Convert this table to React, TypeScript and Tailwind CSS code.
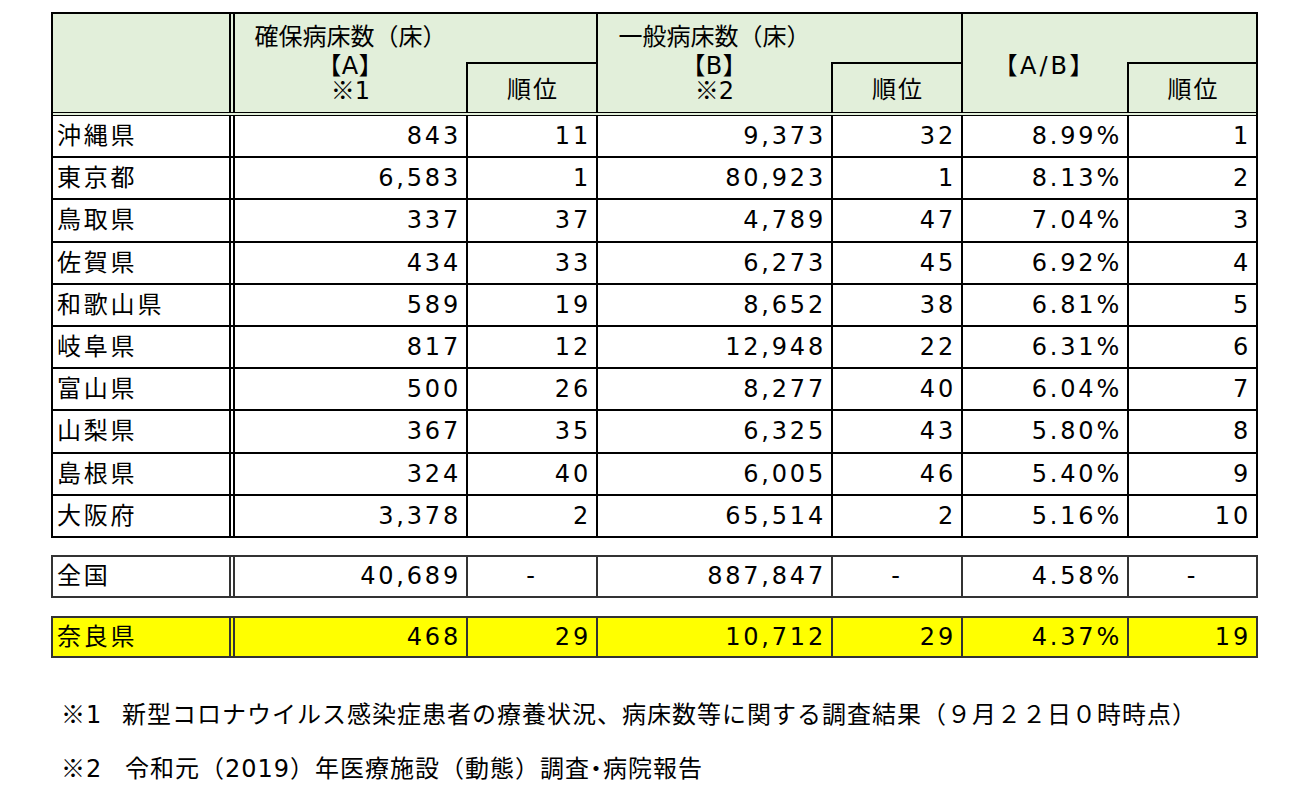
import React from "react"
import clsx from "clsx"

type Row = [string, string, string, string, string, string, string]

const ranking: Row[] = [
  ["沖縄県", "843", "11", "9,373", "32", "8.99%", "1"],
  ["東京都", "6,583", "1", "80,923", "1", "8.13%", "2"],
  ["鳥取県", "337", "37", "4,789", "47", "7.04%", "3"],
  ["佐賀県", "434", "33", "6,273", "45", "6.92%", "4"],
  ["和歌山県", "589", "19", "8,652", "38", "6.81%", "5"],
  ["岐阜県", "817", "12", "12,948", "22", "6.31%", "6"],
  ["富山県", "500", "26", "8,277", "40", "6.04%", "7"],
  ["山梨県", "367", "35", "6,325", "43", "5.80%", "8"],
  ["島根県", "324", "40", "6,005", "46", "5.40%", "9"],
  ["大阪府", "3,378", "2", "65,514", "2", "5.16%", "10"],
]

const national: Row = ["全国", "40,689", "-", "887,847", "-", "4.58%", "-"]
const nara: Row = ["奈良県", "468", "29", "10,712", "29", "4.37%", "19"]

const cjk = "font-['Noto_Sans_CJK_JP',sans-serif]"
const palt = "font-['Noto_Sans_CJK_JP',sans-serif] [font-feature-settings:'palt']"

function DataRow(props: { row: Row; line: string; className?: string }) {
  const { row, line } = props
  const num = "flex items-center justify-end pr-[5px]"
  const dash = "flex items-center justify-center"
  return (
    <div className={clsx("flex text-[24px] tracking-[2.8px] border-b-2", line, props.className)}>
      <div className={clsx("w-[182px] flex items-center pl-[4px] border-r-[6px] border-double", line)}>
        {row[0]}
      </div>
      <div className={clsx("w-[233px] border-r-2", num, line)}>{row[1]}</div>
      <div className={clsx("w-[130px] border-r-2", row[2] === "-" ? dash : num, line)}>{row[2]}</div>
      <div className={clsx("w-[235px] border-r-2", num, line)}>{row[3]}</div>
      <div className={clsx("w-[130px] border-r-2", row[4] === "-" ? dash : num, line)}>{row[4]}</div>
      <div className={clsx("w-[166px] border-r-2", num, line)}>{row[5]}</div>
      <div className={clsx("w-[127px]", row[6] === "-" ? dash : num)}>{row[6]}</div>
    </div>
  )
}

function Rank() {
  return (
    <div className="flex h-full flex-col">
      <div className="h-[48px] shrink-0" />
      <div className="flex-1 flex items-center justify-center border-l-2 border-t-2 border-black tracking-[2px] pl-[2px] pt-[3px]">
        順位
      </div>
    </div>
  )
}

function HeadLines(props: { title: string; mark: string; note: string }) {
  return (
    <div className="pt-[8px] text-center">
      <div className={clsx(cjk, "h-[29px] leading-[25px]")}>{props.title}</div>
      <div className="h-[25px] leading-[25px] tracking-[1px]">
        <span className={palt}>【</span>
        {props.mark}
        <span className={palt}>】</span>
      </div>
      <div className="h-[25px] leading-[25px]">
        <span className={cjk}>※</span>
        {props.note}
      </div>
    </div>
  )
}

export default function App() {
  return (
    <div className="min-h-screen bg-white pt-[12px] pl-[51px] text-black font-['DejaVu_Sans','Noto_Sans_CJK_JP',sans-serif]">
      <div className="w-[1207px] border-x-2 border-t-2 border-black">
        <div className="flex h-[102px] bg-[#e2efda] border-b-4 border-double border-black text-[24px]">
          <div className="w-[182px] border-r-[6px] border-double border-black" />
          <div className="flex w-[363px] border-r-2 border-black">
            <div className="w-[231px]">
              <HeadLines title="確保病床数（床）" mark="A" note="1" />
            </div>
            <div className="w-[130px]">
              <Rank />
            </div>
          </div>
          <div className="flex w-[365px] border-r-2 border-black">
            <div className="w-[233px]">
              <HeadLines title="一般病床数（床）" mark="B" note="2" />
            </div>
            <div className="w-[130px]">
              <Rank />
            </div>
          </div>
          <div className="flex w-[293px]">
            <div className="w-[164px] flex items-center justify-center pt-[3px]">
              <span className="tracking-[3px] leading-[25px]">
                <span className={palt}>【</span>A/B<span className={palt}>】</span>
              </span>
            </div>
            <div className="w-[129px]">
              <Rank />
            </div>
          </div>
        </div>
        {ranking.map((row) => (
          <DataRow key={row[0]} row={row} line="border-black" className="h-[42.2px]" />
        ))}
      </div>

      <div className="w-[1207px] mt-[17px] border-x-2 border-t-2 border-[#333]">
        <DataRow row={national} line="border-[#333]" className="h-[41px]" />
      </div>

      <div className="w-[1207px] mt-[18px] border-x-2 border-t-2 border-[#333] bg-[#ffff00]">
        <DataRow row={nara} line="border-[#333]" className="h-[40px]" />
      </div>

      <div className="mt-[40px] pl-[10px] text-[24px] leading-[30px] tracking-[1px]">
        <div className="flex">
          <span className="w-[61px]">
            <span className={cjk}>※</span>1
          </span>
          <span className={cjk}>新型コロナウイルス感染症患者の療養状況、病床数等に関する調査結果（９月２２日０時時点）</span>
        </div>
        <div className="flex mt-[22px]">
          <span className="w-[64px]">
            <span className={cjk}>※</span>2
          </span>
          <span>
            <span className={cjk}>令和元（</span>2019<span className={cjk}>）年医療施設（動態）調査</span>
            <span className={palt}>・</span>
            <span className={cjk}>病院報告</span>
          </span>
        </div>
      </div>
    </div>
  )
}
